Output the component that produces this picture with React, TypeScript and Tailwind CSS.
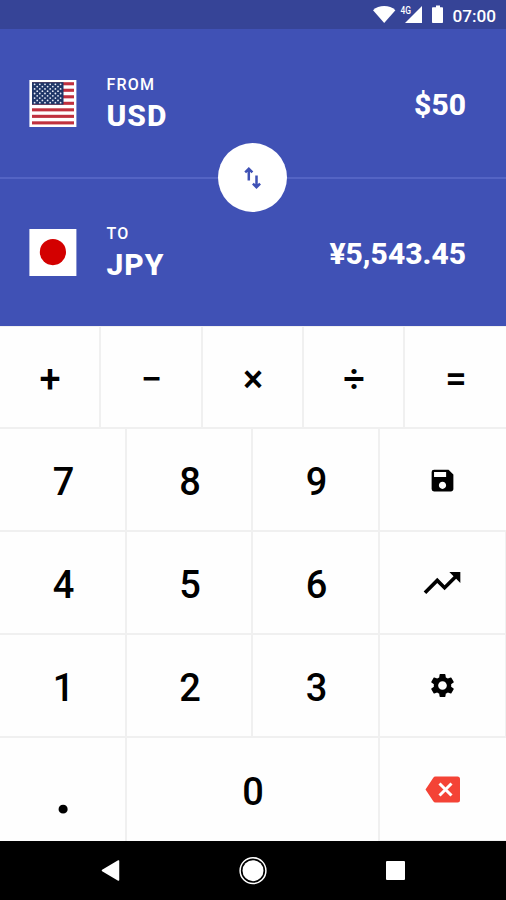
import { ReactNode, useState } from 'react';
import clsx from 'clsx';
import { MdSave, MdSettings, MdTrendingUp } from 'react-icons/md';

interface CurrencyRowProps {
  label: string;
  code: string;
  amount: string;
  flag: ReactNode;
}

interface KeyProps {
  children: ReactNode;
  className?: string;
  onClick?: () => void;
}

const STRIPES = [0, 1, 2, 3, 4, 5, 6];
const STAR_ROWS = [0, 1, 2, 3, 4, 5, 6, 7, 8];

const UsFlag = () => (
  <svg width="48" height="48" viewBox="0 0 48 48">
    <rect x="0.400" width="47" height="47" fill="#fff" />
    {STRIPES.map((i) => (
      <rect
        key={i}
        x="3"
        y={2.2 + i * 6.52}
        width="42"
        height="3.1"
        fill="#c0313f"
      />
    ))}
    <rect x="3" y="2.2" width="31.5" height="22.4" fill="#1f3768" />
    {STAR_ROWS.map((row) =>
      Array.from({ length: row % 2 ? 5 : 6 }, (_, col) => (
        <circle
          key={`${row}-${col}`}
          cx={5.6 + col * 5.2 + (row % 2 ? 2.6 : 0)}
          cy={4.3 + row * 2.3}
          r="0.9"
          fill="#e8edf8"
        />
      ))
    )}
  </svg>
);

const JapanFlag = () => (
  <svg width="48" height="48" viewBox="0 0 48 48">
    <rect x="0.400" width="47" height="47" fill="#fff" />
    <circle cx="23.900" cy="23.100" r="13.100" fill="#d30000" />
  </svg>
);

const StatusBar = () => (
  <div className="flex h-[29px] shrink-0 items-center bg-[#364497] pr-[10px] pl-[372px] text-white">
    <svg width="72" height="29" viewBox="0 0 72 29" fill="currentColor">
      <path d="M1 10.2C4 7.4 8 6 12.2 6s8.200 1.400 11.200 4.200L12.200 23z" />
      <path d="M50 6v17H33z" />
      <path d="M64 5.500h4v1.800h2.200c.5 0 .8.300.8.800v14.100c0 .5-.3.800-.8.800h-9.400c-.5 0-.8-.3-.8-.8V8.100c0-.5.300-.8.800-.8H64z" />
      <text
        x="28.500"
        y="14"
        fontFamily="Roboto"
        fontSize="10"
        fontWeight="500"
        textLength="10.500"
        lengthAdjust="spacingAndGlyphs"
        stroke="#364497"
        strokeWidth="2"
        paintOrder="stroke"
      >
        4G
      </text>
    </svg>
    <span className="ml-auto pt-[4px] text-[17.2px] leading-none font-medium">
      07:00
    </span>
  </div>
);

const CurrencyRow = ({ label, code, amount, flag }: CurrencyRowProps) => (
  <div className="flex h-[149px] items-center pr-[40px] pl-[29px] text-white">
    {flag}
    <div className="ml-[29.5px] flex flex-col pt-px">
      <span className="text-[16px] leading-[20px] font-medium tracking-[1.2px]">
        {label}
      </span>
      <span className="mt-[3px] text-[30px] leading-[36px] font-extrabold tracking-[1px]">
        {code}
      </span>
    </div>
    <span className="ml-auto pt-[3px] text-[30px] leading-[36px] font-extrabold">
      {amount}
    </span>
  </div>
);

const Key = ({ children, className, onClick }: KeyProps) => (
  <button
    className={clsx(
      'flex cursor-pointer items-center justify-center bg-[#fefefe]',
      className
    )}
    onClick={onClick}
  >
    {children}
  </button>
);

const SwapIcon = () => (
  <svg
    width="18"
    height="22"
    viewBox="0 0 18 22"
    fill="none"
    stroke="#3f51b5"
    strokeWidth="2.500"
  >
    <path d="M4.800 13.500V1.800M1.200 5.400l3.600-3.600 3.600 3.600" />
    <path d="M12.500 8.500v11.700M8.900 16.600l3.600 3.600 3.600-3.600" />
  </svg>
);

const BackspaceIcon = () => (
  <svg width="36" height="27" viewBox="0 0 36 27">
    <path
      d="M10.500.5h22a2.500 2.500 0 0 1 2.500 2.500v21a2.500 2.500 0 0 1-2.500 2.500h-22c-1 0-1.700-.4-2.200-1.200L.5 13.500l7.800-11.800C8.800.9 9.500.5 10.500.5z"
      fill="#f44336"
    />
    <path
      d="M14.500 7.500l12 12M26.500 7.500l-12 12"
      stroke="#fff"
      strokeWidth="3"
    />
  </svg>
);

const NavigationBar = () => (
  <div className="flex h-[59px] items-center justify-between bg-black pr-[101px] pl-[101px]">
    <svg width="19" height="22" viewBox="0 0 19 22">
      <path
        d="M1.500 10.500L17.500 1v19z"
        fill="#fff"
        stroke="#fff"
        strokeWidth="1.500"
        strokeLinejoin="round"
      />
    </svg>
    <svg width="28" height="28" viewBox="0 0 28 28">
      <circle cx="14" cy="13.700" r="12.900" fill="none" stroke="#fff" strokeWidth="1.500" />
      <circle cx="14" cy="13.700" r="10.500" fill="#fff" />
    </svg>
    <div className="size-[19px] rounded-[1px] bg-white" />
  </div>
);

const operators = ['+', '−', '×', '÷', '='];

const App = () => {
  const [swapped, setSwapped] = useState(false);

  const usd = { code: 'USD', amount: '$50', flag: <UsFlag /> };
  const jpy = { code: 'JPY', amount: '¥5,543.45', flag: <JapanFlag /> };
  const [from, to] = swapped ? [jpy, usd] : [usd, jpy];

  return (
    <div className="flex h-[900px] w-[506px] flex-col overflow-hidden bg-white font-[Roboto,sans-serif]">
      <StatusBar />
      <div className="relative h-[297px] shrink-0 bg-[#4051b5]">
        <CurrencyRow label="FROM" {...from} />
        <CurrencyRow label="TO" {...to} />
        <div className="absolute top-[148px] h-[2px] w-full bg-[#5464c4]" />
        <button
          className="absolute top-[114px] left-[218px] flex size-[69px] cursor-pointer items-center justify-center rounded-full bg-white"
          onClick={() => setSwapped(!swapped)}
        >
          <SwapIcon />
        </button>
      </div>

      <div className="flex grow flex-col gap-[2px] bg-[#f0f0f0] pt-px text-[38px] leading-none font-medium text-black">
        <div className="grid h-[100px] grid-cols-[99px_100px_99px_99px_1fr] gap-[2px]">
          {operators.map((operator) => (
            <Key key={operator} className="pt-[3px] pl-px">
              {operator}
            </Key>
          ))}
        </div>
        <div className="grid grow grid-cols-[125px_124px_125px_1fr] grid-rows-[101px_101px_101px_1fr] gap-[2px]">
          <Key className="pt-[4px] pl-[2px]">7</Key>
          <Key className="pt-[4px] pl-[2px]">8</Key>
          <Key className="pt-[4px] pl-[2px]">9</Key>
          <Key className="pt-px pr-[2px]">
            <MdSave size={29} />
          </Key>
          <Key className="pt-[4px] pl-[2px]">4</Key>
          <Key className="pt-[4px] pl-[2px]">5</Key>
          <Key className="pt-[4px] pl-[2px]">6</Key>
          <Key className="mr-px pr-px">
            <MdTrendingUp size={44} />
          </Key>
          <Key className="pt-[4px] pl-[2px]">1</Key>
          <Key className="pt-[4px] pl-[2px]">2</Key>
          <Key className="pt-[4px] pl-[2px]">3</Key>
          <Key className="mr-px">
            <MdSettings size={29} />
          </Key>
          <Key className="pt-[3px] pl-[2px] text-[66px]">.</Key>
          <Key className="col-span-2 pt-[5px] pl-px">0</Key>
          <Key className="mb-px">
            <BackspaceIcon />
          </Key>
        </div>
      </div>
      <NavigationBar />
    </div>
  );
};

export default App;
